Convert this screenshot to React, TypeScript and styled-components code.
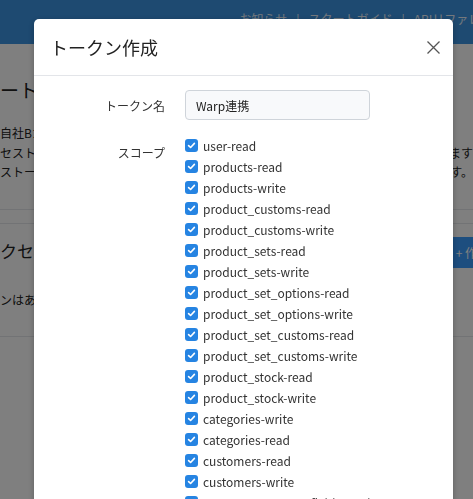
import styled, { createGlobalStyle } from 'styled-components'

const GlobalStyle = createGlobalStyle`
  html, body {
    margin: 0;
    padding: 0;
    overflow: hidden;
  }
  body {
    font-family: "Noto Sans CJK JP", "Noto Sans", sans-serif;
    color: #222;
    background: #fff;
  }
`

const Page = styled.div`
  height: 499px;
  overflow: hidden;
`

const Header = styled.header`
  height: 44px;
  background: #3c94e2;
  display: flex;
  justify-content: flex-end;
  align-items: center;
  padding-bottom: 8px;
  box-sizing: border-box;
  overflow: hidden;
`

const Nav = styled.nav`
  display: flex;
  gap: 9px;
  font-size: 12px;
  color: #e8f1fb;
  white-space: nowrap;
  margin-right: -76px;
`

const Main = styled.main`
  overflow: hidden;
`

const Section = styled.section`
  padding: 33px 0 27px;
  border-bottom: 1px solid #e4e6ea;
`

const Section2 = styled.section`
  margin-top: 13px;
  border-top: 1px solid #e4e6ea;
  border-bottom: 1px solid #e4e6ea;
  padding: 13px 0 26px;
`

const PageTitle = styled.h1`
  margin: 0 0 20px;
  font-size: 19px;
  font-weight: 400;
  line-height: 26px;
  white-space: nowrap;
`

const TextLine = styled.div`
  display: flex;
  justify-content: space-between;
  font-size: 12px;
  line-height: 19.5px;
  white-space: nowrap;
`

const SectionHead = styled.div`
  display: flex;
  justify-content: space-between;
  align-items: center;
  height: 31px;
`

const SectionTitle = styled.h2`
  margin: 0 0 4px;
  font-size: 17px;
  font-weight: 400;
  white-space: nowrap;
`

const CreateButton = styled.button`
  height: 31px;
  margin-right: -26px;
  padding: 0 10px;
  border: none;
  border-radius: 3px;
  background: #3a9cff;
  color: #fff;
  font-family: inherit;
  font-size: 12px;
`

const Note = styled.p`
  margin: 22px 0 0;
  font-size: 12px;
  line-height: 20px;
  white-space: nowrap;
`

const Overlay = styled.div`
  position: fixed;
  inset: 0;
  background: rgba(0, 0, 0, 0.5);
  overflow: hidden;
`

const Dialog = styled.div`
  margin: 19px 20px 0 34px;
  background: #fff;
  border-radius: 5px;
  box-shadow: 0 2px 6px rgba(0, 0, 0, 0.25);
`

const DialogHeader = styled.div`
  display: flex;
  justify-content: space-between;
  align-items: center;
  padding: 16px 12px 16px 16px;
  border-bottom: 1px solid #e3e5e9;
`

const DialogTitle = styled.h5`
  margin: 0;
  font-size: 18px;
  font-weight: 400;
  line-height: 24px;
  color: #222;
`

const CloseButton = styled.button`
  display: flex;
  align-items: center;
  justify-content: center;
  width: 16px;
  height: 16px;
  padding: 0;
  border: none;
  background: none;
  color: #555;
`

const DialogBody = styled.div`
  padding: 14px 16px;
`

const FormRow = styled.div<{ $gap?: number }>`
  display: grid;
  grid-template-columns: 115px 1fr;
  column-gap: 20px;
  margin-bottom: ${(p) => p.$gap ?? 0}px;
`

const Label = styled.label<{ $top?: number }>`
  text-align: right;
  font-size: 12px;
  line-height: 21px;
  color: #333;
  padding-top: ${(p) => p.$top ?? 0}px;
  align-self: ${(p) => (p.$top ? 'start' : 'center')};
`

const TextInput = styled.input`
  width: 185px;
  height: 30px;
  box-sizing: border-box;
  padding: 0 10px;
  border: 1px solid #cfd4da;
  border-radius: 4px;
  background: #f8f9fb;
  font-family: inherit;
  font-size: 12px;
  color: #222;
  outline: none;
`

const ScopeList = styled.div`
  display: flex;
  flex-direction: column;
`

const ScopeItem = styled.label`
  display: flex;
  align-items: center;
  gap: 5px;
  height: 21px;
  font-size: 12px;
  color: #333;
  white-space: nowrap;
`

const Check = styled.span`
  display: inline-flex;
  align-items: center;
  justify-content: center;
  width: 13px;
  height: 13px;
  border-radius: 3px;
  background: #2684e2;
  flex-shrink: 0;
`

const scopes = [
  'user-read',
  'products-read',
  'products-write',
  'product_customs-read',
  'product_customs-write',
  'product_sets-read',
  'product_sets-write',
  'product_set_options-read',
  'product_set_options-write',
  'product_set_customs-read',
  'product_set_customs-write',
  'product_stock-read',
  'product_stock-write',
  'categories-write',
  'categories-read',
  'customers-read',
  'customers-write',
  'customer_custom_fields-read',
  'customer_custom_fields-write',
]

export default function App() {
  return (
    <>
      <GlobalStyle />
      <Page>
        <Header>
          <Nav>
            <span>お知らせ</span>
            <span>|</span>
            <span>スタートガイド</span>
            <span>|</span>
            <span>APIリファレンス</span>
            <span>メール</span>
          </Nav>
        </Header>
        <Main>
          <Section>
            <PageTitle>ートークン管理</PageTitle>
            <TextLine>
              <span>自社Bカートのデータにアクセスするためのトークンです。</span>
              <span></span>
            </TextLine>
            <TextLine>
              <span>セストークンを発行すると外部アプリと連携できます</span>
              <span>ます</span>
            </TextLine>
            <TextLine>
              <span>ストークンは大切に保管してください。</span>
              <span>す。</span>
            </TextLine>
          </Section>
          <Section2>
            <SectionHead>
              <SectionTitle>クセストークン</SectionTitle>
              <CreateButton>+ 作成</CreateButton>
            </SectionHead>
            <Note>ンはありません。</Note>
          </Section2>
        </Main>
      </Page>
      <Overlay>
        <Dialog>
          <DialogHeader>
            <DialogTitle>トークン作成</DialogTitle>
            <CloseButton aria-label="閉じる">
              <svg width="13" height="13" viewBox="0 0 13 13">
                <path d="M0.5 0.5 L12.5 12.5 M12.5 0.5 L0.5 12.5" stroke="currentColor" strokeWidth="1.3" fill="none" />
              </svg>
            </CloseButton>
          </DialogHeader>
          <DialogBody>
            <FormRow $gap={15}>
              <Label>トークン名</Label>
              <TextInput defaultValue="Warp連携" />
            </FormRow>
            <FormRow>
              <Label $top={7}>スコープ</Label>
              <ScopeList>
                {scopes.map((s) => (
                  <ScopeItem key={s}>
                    <Check>
                      <svg width="9" height="9" viewBox="0 0 9 9">
                        <path d="M1.6 4.6 L3.6 6.5 L7.4 2.4" stroke="#fff" strokeWidth="1.6" fill="none" strokeLinecap="round" strokeLinejoin="round" />
                      </svg>
                    </Check>
                    {s}
                  </ScopeItem>
                ))}
              </ScopeList>
            </FormRow>
          </DialogBody>
        </Dialog>
      </Overlay>
    </>
  )
}
